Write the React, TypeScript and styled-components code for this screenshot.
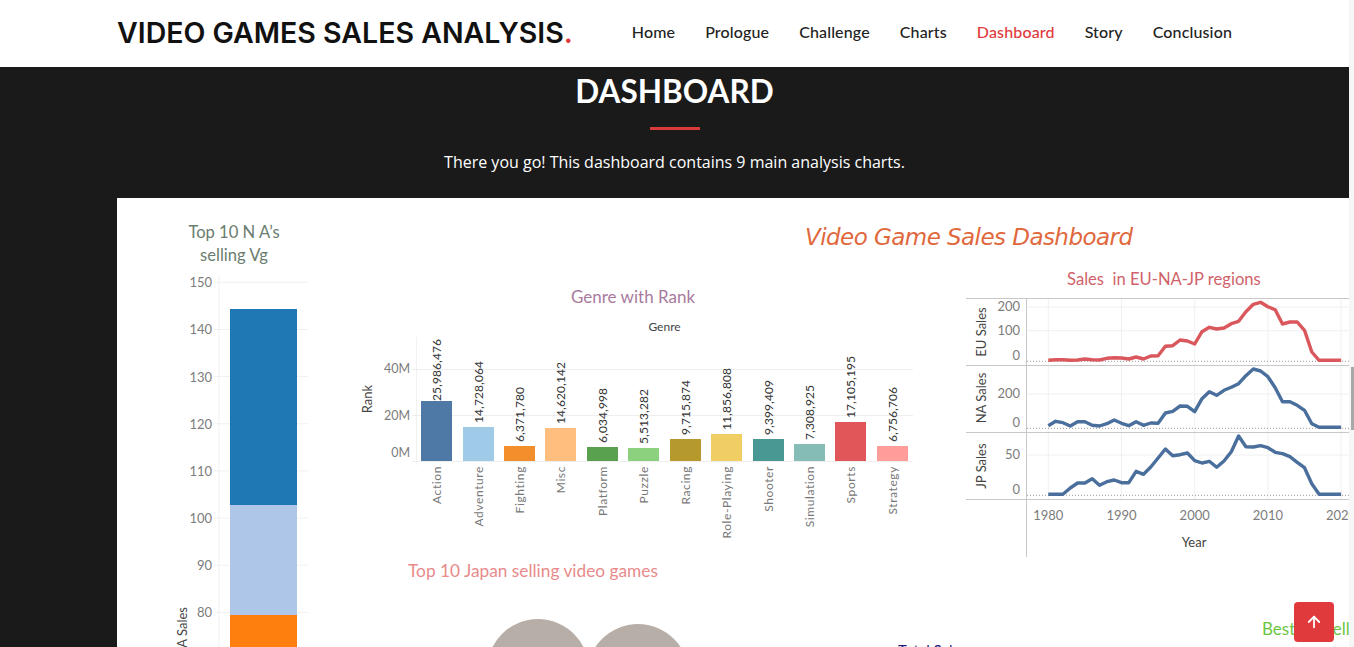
import styled, { createGlobalStyle } from "styled-components"
import { ArrowUp } from "lucide-react"

const NavItems = ["Home", "Prologue", "Challenge", "Charts", "Dashboard", "Story", "Conclusion"]

const Genres = [
  { name: "Action", value: "25,986,476", x: 421, top: 401, labelY: 401, color: "#4e79a7" },
  { name: "Adventure", value: "14,728,064", x: 463, top: 427, labelY: 423, color: "#a0cbe8" },
  { name: "Fighting", value: "6,371,780", x: 504, top: 446, labelY: 442, color: "#f28e2b" },
  { name: "Misc", value: "14,620,142", x: 545, top: 428, labelY: 424, color: "#ffbe7d" },
  { name: "Platform", value: "6,034,998", x: 587, top: 447, labelY: 443, color: "#59a14f" },
  { name: "Puzzle", value: "5,513,282", x: 628, top: 448, labelY: 444, color: "#8cd17d" },
  { name: "Racing", value: "9,715,874", x: 670, top: 439, labelY: 435, color: "#b6992d" },
  { name: "Role-Playing", value: "11,856,808", x: 711, top: 434, labelY: 430, color: "#f1ce63" },
  { name: "Shooter", value: "9,399,409", x: 753, top: 439, labelY: 435, color: "#499894" },
  { name: "Simulation", value: "7,308,925", x: 794, top: 444, labelY: 440, color: "#86bcb6" },
  { name: "Sports", value: "17,105,195", x: 835, top: 422, labelY: 418, color: "#e15759" },
  { name: "Strategy", value: "6,756,706", x: 877, top: 446, labelY: 442, color: "#ff9d9a" },
]

// y positions of the yearly points, 1980 to 2020, read off the picture at 3x
const EuSales = [301, 299, 299, 301, 300, 297, 299, 300, 295, 293, 294, 297, 291, 297, 288, 287, 259, 257, 240, 243, 252, 215, 202, 207, 204, 191, 184, 155, 133, 127, 140, 149, 192, 186, 186, 211, 276, 301, 301, 301, 301]
const NaSales = [497, 484, 488, 498, 485, 485, 496, 498, 491, 480, 490, 497, 485, 496, 489, 490, 459, 454, 438, 439, 455, 416, 395, 406, 391, 382, 371, 347, 327, 333, 350, 383, 425, 425, 436, 451, 491, 502, 502, 502, 502]
const JpSales = [703, 703, 703, 684, 669, 669, 656, 676, 665, 660, 668, 668, 634, 643, 621, 594, 567, 587, 584, 579, 602, 609, 604, 622, 603, 575, 528, 560, 561, 557, 563, 577, 581, 590, 607, 623, 671, 703, 703, 703, 703]

const toPoints = (series: number[]) =>
  series.map((y, i) => `${(1048.3 + i * 7.32).toFixed(1)},${(260 + y / 3).toFixed(1)}`).join(" ")

const SalesTicks = [150, 140, 130, 120, 110, 100, 90, 80]

const Regions = [
  { name: "EU Sales", center: 332, zero: 361.3, points: EuSales, color: "#d9575d" },
  { name: "NA Sales", center: 398, zero: 428.3, points: NaSales, color: "#4a6f9c" },
  { name: "JP Sales", center: 466, zero: 495.3, points: JpSales, color: "#4a6f9c" },
]

const RegionTicks = [
  { label: "200", text: 311, grid: 307 },
  { label: "100", text: 335, grid: 330.7 },
  { label: "0", text: 360, grid: 0 },
  { label: "200", text: 398, grid: 394 },
  { label: "0", text: 427, grid: 0 },
  { label: "50", text: 459, grid: 455 },
  { label: "0", text: 494, grid: 0 },
]

export default function App() {
  return (
    <Shell>
      <GlobalStyle />
      <Page>
        <Header>
          <Logo>VIDEO GAMES SALES ANALYSIS<Dot>.</Dot></Logo>
          <Nav>
            {NavItems.map((item) => (
              <NavLink key={item} $active={item === "Dashboard"}>{item}</NavLink>
            ))}
          </Nav>
        </Header>
        <Intro>
          <Heading>DASHBOARD</Heading>
          <Rule />
          <Lead>There you go! This dashboard contains 9 main analysis charts.</Lead>
        </Intro>
        <Panel>
          <LeftColumn>
            <NaTitle>Top 10 N A’s<br />selling Vg</NaTitle>
            <svg width="223" height="372" viewBox="117 275 223 372">
              <line x1="219" y1="275" x2="219" y2="647" stroke="#f2f2f2" />
              {SalesTicks.map((tick, i) => {
                const y = 282.3 + i * 47.15
                return (
                  <g key={tick}>
                    <line x1="214" y1={y} x2="308" y2={y} stroke="#f0f0f0" />
                    <AxisText x="212" y={y + 5} textAnchor="end" fontSize="13">{tick}</AxisText>
                  </g>
                )
              })}
              <rect x="230" y="309" width="67" height="196" fill="#1f77b4" />
              <rect x="230" y="505" width="67" height="110" fill="#aec7e8" />
              <rect x="230" y="615" width="67" height="32" fill="#ff7f0e" />
              <TitleText x="187" y="607" textAnchor="end" fontSize="13" transform="rotate(-90 187 607)">NA Sales</TitleText>
            </svg>
          </LeftColumn>
          <DashboardTitle>Video Game Sales Dashboard</DashboardTitle>
          <MiddleColumn>
            <GenreTitle>Genre with Rank</GenreTitle>
            <svg width="626" height="232" viewBox="340 316 626 232">
              <TitleText x="664.5" y="331" textAnchor="middle" fontSize="12">Genre</TitleText>
              <TitleText x="372" y="399" textAnchor="middle" fontSize="13" transform="rotate(-90 372 399)">Rank</TitleText>
              <line x1="416.5" y1="337" x2="416.5" y2="465" stroke="#f2f2f2" />
              <line x1="412" y1="369.5" x2="913" y2="369.5" stroke="#eeeeee" />
              <line x1="412" y1="415.5" x2="913" y2="415.5" stroke="#eeeeee" />
              <line x1="412" y1="461.5" x2="913" y2="461.5" stroke="#eeeeee" />
              <AxisText x="410" y="373" textAnchor="end" fontSize="12.5">40M</AxisText>
              <AxisText x="410" y="420" textAnchor="end" fontSize="12.5">20M</AxisText>
              <AxisText x="410" y="457" textAnchor="end" fontSize="12.5">0M</AxisText>
              {Genres.map((genre) => {
                const center = genre.x + 15.5
                return (
                  <g key={genre.name}>
                    <rect x={genre.x} y={genre.top} width="31" height={461 - genre.top} fill={genre.color} />
                    <ValueText x={center + 4} y={genre.labelY} transform={`rotate(-90 ${center + 4} ${genre.labelY})`}>{genre.value}</ValueText>
                    <CategoryText x={center + 4} y="466" textAnchor="end" transform={`rotate(-90 ${center + 4} 466)`}>{genre.name}</CategoryText>
                  </g>
                )
              })}
            </svg>
            <JapanTitle>Top 10 Japan selling video games</JapanTitle>
            <BubbleRow>
              <svg width="500" height="60" viewBox="340 600 500 60">
                <circle cx="538" cy="670" r="51" fill="#b8aea8" />
                <circle cx="638" cy="675" r="51" fill="#b8aea8" />
              </svg>
              <TotalSales>Total Sales</TotalSales>
            </BubbleRow>
          </MiddleColumn>
          <RightColumn>
            <RegionTitle>Sales  in EU-NA-JP regions</RegionTitle>
            <svg width="383" height="262" viewBox="966 297 383 262">
              {[1048.3, 1121.5, 1194.7, 1267.9, 1341.1].map((x) => (
                <line key={x} x1={x} y1="298" x2={x} y2="499" stroke="#f0f0f0" />
              ))}
              {RegionTicks.filter((tick) => tick.grid > 0).map((tick) => (
                <line key={tick.grid} x1="1027" y1={tick.grid} x2="1349" y2={tick.grid} stroke="#f0f0f0" />
              ))}
              {[298.5, 365.5, 432.5, 499.5].map((y) => (
                <line key={y} x1="966" y1={y} x2="1349" y2={y} stroke="#c8c8c8" />
              ))}
              <line x1="1026.5" y1="298" x2="1026.5" y2="557" stroke="#c8c8c8" />
              {Regions.map((region) => (
                <g key={region.name}>
                  <line x1="1027" y1={region.zero} x2="1349" y2={region.zero} stroke="#999999" strokeDasharray="1 2" />
                  <polyline points={toPoints(region.points)} fill="none" stroke={region.color} strokeWidth="3.4" strokeLinejoin="round" />
                  <TitleText x="985.5" y={region.center} textAnchor="middle" fontSize="13" transform={`rotate(-90 985.5 ${region.center})`}>{region.name}</TitleText>
                </g>
              ))}
              {RegionTicks.map((tick) => (
                <AxisText key={tick.text} x="1020" y={tick.text} textAnchor="end" fontSize="13">{tick.label}</AxisText>
              ))}
              {[1980, 1990, 2000, 2010, 2020].map((year, i) => (
                <AxisText key={year} x={1048.3 + i * 73.2} y="520" textAnchor="middle" fontSize="13">{year}</AxisText>
              ))}
              <TitleText x="1194" y="547" textAnchor="middle" fontSize="13">Year</TitleText>
            </svg>
            <BestSelling>Best Selling</BestSelling>
          </RightColumn>
        </Panel>
      </Page>
      <ScrollRail><ScrollThumb /></ScrollRail>
      <BackToTop><ArrowUp size={18} strokeWidth={2.4} /></BackToTop>
    </Shell>
  )
}

const GlobalStyle = createGlobalStyle`
  html, body {
    margin: 0;
    height: 100%;
    overflow: hidden;
    background: #1a1a1a;
  }
`

const Shell = styled.div`
  display: flex;
  width: 1354px;
  height: 647px;
  overflow: hidden;
`

const Page = styled.main`
  width: 1349px;
  height: 647px;
  display: flex;
  flex-direction: column;
  overflow: hidden;
  background: #1a1a1a;
`

const Header = styled.header`
  flex: none;
  height: 67px;
  box-sizing: border-box;
  padding: 0 117px 3px;
  background: #ffffff;
  display: flex;
  align-items: center;
  justify-content: space-between;
`

const Logo = styled.div`
  font-family: Inter, "Liberation Sans", sans-serif;
  font-size: 28.5px;
  font-weight: 600;
  color: #111111;
  white-space: nowrap;
`

const Dot = styled.span`
  color: #e03a3c;
`

const Nav = styled.nav`
  display: flex;
  gap: 30px;
  margin-top: -1px;
`

const NavLink = styled.a<{ $active?: boolean }>`
  font-family: Lato, "Liberation Sans", sans-serif;
  font-size: 16px;
  letter-spacing: 0.14px;
  font-weight: 500;
  color: ${(props) => (props.$active ? "#e03a3c" : "#222222")};
`

const Intro = styled.section`
  flex: none;
  height: 131px;
  display: flex;
  flex-direction: column;
  align-items: center;
  color: #ffffff;
`

const Heading = styled.h2`
  margin: 6px 0 0;
  font-family: Lato, "Liberation Sans", sans-serif;
  font-size: 31.5px;
  line-height: 36px;
  font-weight: 700;
`

const Rule = styled.div`
  width: 50px;
  height: 3px;
  margin-top: 18px;
  background: #d93b3b;
`

const Lead = styled.p`
  margin: 21px 0 0;
  font-family: "Open Sans", "Liberation Sans", sans-serif;
  font-size: 16px;
  line-height: 22px;
  font-weight: 500;
`

const Panel = styled.section`
  flex: 1;
  min-height: 0;
  margin-left: 117px;
  background: #ffffff;
  overflow: hidden;
  display: grid;
  grid-template-columns: 223px 626px 383px;
  grid-template-rows: 60px 1fr;
`

const LeftColumn = styled.div`
  grid-column: 1;
  grid-row: 1 / 3;
  display: flex;
  flex-direction: column;
`

const NaTitle = styled.div`
  height: 77px;
  box-sizing: border-box;
  padding: 23px 0 0 11px;
  text-align: center;
  font-family: Lato, "Liberation Sans", sans-serif;
  font-size: 16.6px;
  line-height: 23px;
  color: #6b7d6e;
`

const DashboardTitle = styled.h1`
  grid-column: 2 / 4;
  grid-row: 1;
  margin: 0;
  padding: 24px 0 0 465px;
  font-family: "DejaVu Sans", sans-serif;
  font-size: 23px;
  letter-spacing: -0.55px;
  line-height: 30px;
  font-weight: 400;
  font-style: italic;
  color: #e0683c;
  white-space: nowrap;
`

const MiddleColumn = styled.div`
  grid-column: 2;
  grid-row: 2;
  display: flex;
  flex-direction: column;
`

const GenreTitle = styled.div`
  height: 58px;
  box-sizing: border-box;
  padding: 29px 0 0 231px;
  font-family: Lato, "Liberation Sans", sans-serif;
  font-size: 17px;
  line-height: 20px;
  color: #a87b9e;
`

const JapanTitle = styled.div`
  height: 52px;
  box-sizing: border-box;
  padding: 13px 0 0 68px;
  font-family: Lato, "Liberation Sans", sans-serif;
  font-size: 17.3px;
  line-height: 20px;
  color: #e88a8a;
`

const BubbleRow = styled.div`
  display: flex;
  position: relative;
`

const TotalSales = styled.span`
  position: absolute;
  left: 558px;
  top: 41px;
  font-family: Lato, "Liberation Sans", sans-serif;
  font-size: 15px;
  line-height: 18px;
  color: #2b1a7a;
  white-space: nowrap;
`

const RightColumn = styled.div`
  grid-column: 3;
  grid-row: 2;
  display: flex;
  flex-direction: column;
`

const RegionTitle = styled.div`
  height: 39px;
  box-sizing: border-box;
  padding: 11px 0 0 101px;
  font-family: Lato, "Liberation Sans", sans-serif;
  font-size: 16.6px;
  line-height: 20px;
  color: #d0636a;
  white-space: pre;
`

const BestSelling = styled.div`
  margin: 60px 0 0 296px;
  font-family: Lato, "Liberation Sans", sans-serif;
  font-size: 17px;
  line-height: 20px;
  word-spacing: 24px;
  color: #6cc644;
  white-space: nowrap;
`

const AxisText = styled.text`
  font-family: Lato, "Liberation Sans", sans-serif;
  fill: #7c7c7c;
`

const TitleText = styled.text`
  font-family: Lato, "Liberation Sans", sans-serif;
  fill: #444444;
`

const ValueText = styled.text`
  font-family: Lato, "Liberation Sans", sans-serif;
  font-size: 12px;
  letter-spacing: 0.1px;
  fill: #333333;
`

const CategoryText = styled.text`
  font-family: Lato, "Liberation Sans", sans-serif;
  font-size: 12px;
  letter-spacing: 0.6px;
  fill: #777777;
`

const ScrollRail = styled.div`
  flex: none;
  width: 5px;
  height: 647px;
  display: flex;
  justify-content: flex-end;
  background: #f6f6f6;
`

const ScrollThumb = styled.div`
  width: 3px;
  height: 63px;
  margin-top: 367px;
  background: #a8a8a8;
`

const BackToTop = styled.button`
  position: fixed;
  left: 1294px;
  top: 602px;
  width: 40px;
  height: 40px;
  padding: 0;
  border: none;
  border-radius: 4px;
  background: #e03a3c;
  color: #ffffff;
  display: flex;
  align-items: center;
  justify-content: center;
`
